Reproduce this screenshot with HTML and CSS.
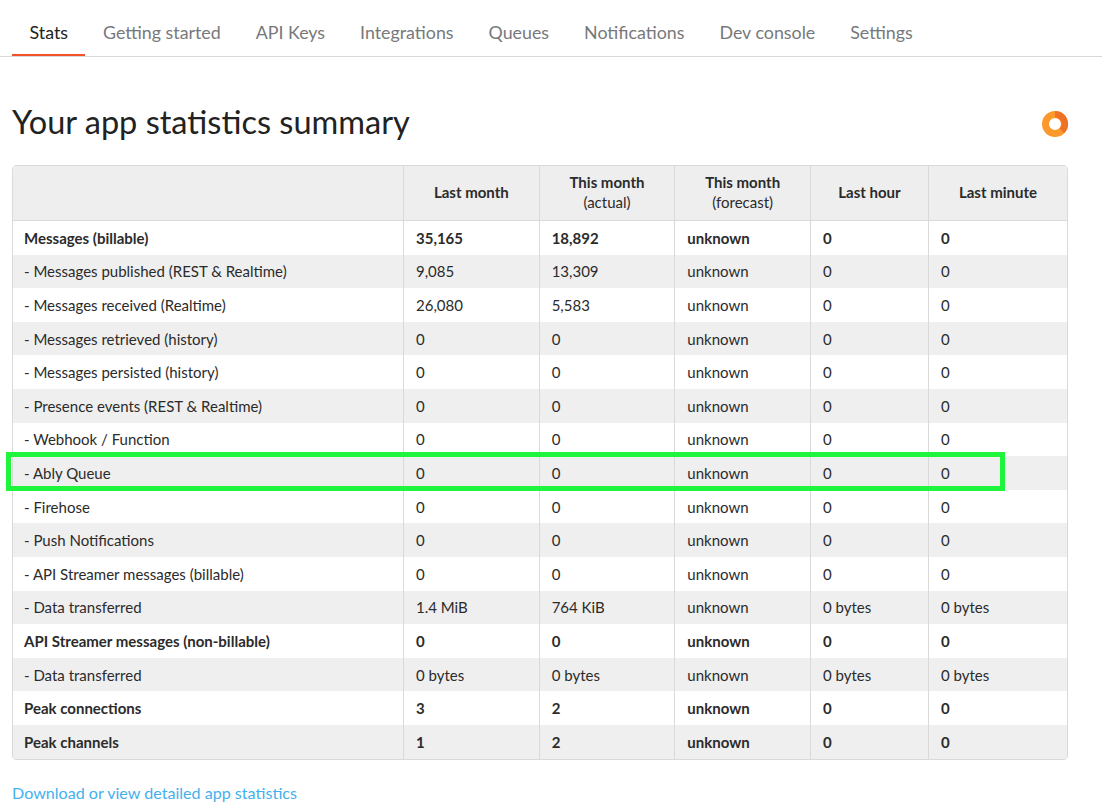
FILE: index.html
```html
<!DOCTYPE html>
<html>
<head>
    <title>Your app statistics summary</title>
    <link rel="stylesheet" href="styles.css">
</head>
<body>
    <nav class="tabs">
        <a class="tab tab-active" href="#">Stats</a>
        <a class="tab" href="#">Getting started</a>
        <a class="tab" href="#">API Keys</a>
        <a class="tab" href="#">Integrations</a>
        <a class="tab" href="#">Queues</a>
        <a class="tab" href="#">Notifications</a>
        <a class="tab" href="#">Dev console</a>
        <a class="tab" href="#">Settings</a>
    </nav>

    <main class="content">
        <div class="title-row">
            <h1>Your app statistics summary</h1>
            <svg class="spinner" width="26" height="26" viewBox="0 0 26 26">
                <circle cx="13" cy="13" r="9.5" fill="none" stroke="#fb992c" stroke-width="7"/>
                <path d="M13 0 A13 13 0 0 1 22.2 22.2 L17.6 17.6 A6.5 6.5 0 0 0 13 6.5 Z" fill="#ef7123"/>
            </svg>
        </div>

        <div class="stats-wrap">
            <table class="stats">
                <thead>
                    <tr>
                        <th class="col-name"></th>
                        <th class="col-a">Last month</th>
                        <th class="col-a">This month<span class="sub">(actual)</span></th>
                        <th class="col-a">This month<span class="sub">(forecast)</span></th>
                        <th class="col-b">Last hour</th>
                        <th>Last minute</th>
                    </tr>
                </thead>
                <tbody>
                    <tr class="strong"><td>Messages (billable)</td><td>35,165</td><td>18,892</td><td>unknown</td><td>0</td><td>0</td></tr>
                    <tr><td>- Messages published (REST &amp; Realtime)</td><td>9,085</td><td>13,309</td><td>unknown</td><td>0</td><td>0</td></tr>
                    <tr><td>- Messages received (Realtime)</td><td>26,080</td><td>5,583</td><td>unknown</td><td>0</td><td>0</td></tr>
                    <tr><td>- Messages retrieved (history)</td><td>0</td><td>0</td><td>unknown</td><td>0</td><td>0</td></tr>
                    <tr><td>- Messages persisted (history)</td><td>0</td><td>0</td><td>unknown</td><td>0</td><td>0</td></tr>
                    <tr><td>- Presence events (REST &amp; Realtime)</td><td>0</td><td>0</td><td>unknown</td><td>0</td><td>0</td></tr>
                    <tr><td>- Webhook / Function</td><td>0</td><td>0</td><td>unknown</td><td>0</td><td>0</td></tr>
                    <tr><td>- Ably Queue</td><td>0</td><td>0</td><td>unknown</td><td>0</td><td>0</td></tr>
                    <tr><td>- Firehose</td><td>0</td><td>0</td><td>unknown</td><td>0</td><td>0</td></tr>
                    <tr><td>- Push Notifications</td><td>0</td><td>0</td><td>unknown</td><td>0</td><td>0</td></tr>
                    <tr><td>- API Streamer messages (billable)</td><td>0</td><td>0</td><td>unknown</td><td>0</td><td>0</td></tr>
                    <tr><td>- Data transferred</td><td>1.4 MiB</td><td>764 KiB</td><td>unknown</td><td>0 bytes</td><td>0 bytes</td></tr>
                    <tr class="strong"><td>API Streamer messages (non-billable)</td><td>0</td><td>0</td><td>unknown</td><td>0</td><td>0</td></tr>
                    <tr><td>- Data transferred</td><td>0 bytes</td><td>0 bytes</td><td>unknown</td><td>0 bytes</td><td>0 bytes</td></tr>
                    <tr class="strong"><td>Peak connections</td><td>3</td><td>2</td><td>unknown</td><td>0</td><td>0</td></tr>
                    <tr class="strong"><td>Peak channels</td><td>1</td><td>2</td><td>unknown</td><td>0</td><td>0</td></tr>
                </tbody>
            </table>
            <div class="highlight"></div>
        </div>

        <a class="details-link" href="#">Download or view detailed app statistics</a>
    </main>
</body>
</html>
```

FILE: styles.css
```css
body {
    margin: 0;
    font-family: Lato, "Open Sans", sans-serif;
    color: #2b2b2b;
    background-color: #fff;
}
.tabs {
    display: flex;
    height: 56px;
    padding-left: 12px;
    border-bottom: 1px solid #d9d9d9;
}
.tab {
    height: 54px;
    padding: 0 17.5px;
    border-bottom: 2px solid transparent;
    color: #77787b;
    font-size: 17.82px;
    line-height: 64px;
    text-decoration: none;
}
.tab-active {
    border-bottom-color: #f4512c;
    color: #222;
}
.content {
    padding: 0 34px 0 12px;
}
.title-row {
    display: flex;
    justify-content: space-between;
    align-items: center;
    box-sizing: border-box;
    height: 108px;
    padding-top: 20px;
}
h1 {
    margin: 0;
    color: #222;
    font-size: 32.5px;
    font-weight: 400;
}
.spinner {
    display: block;
    margin-top: 6px;
}
.stats-wrap {
    position: relative;
}
.stats {
    width: 100%;
    border: 1px solid #d9d9d9;
    border-radius: 4px;
    border-spacing: 0;
    table-layout: fixed;
    font-size: 15px;
}
.stats th {
    box-sizing: border-box;
    height: 55px;
    padding: 0 6px 2px;
    border-bottom: 1px solid #d9d9d9;
    border-left: 1px solid #d9d9d9;
    background-color: #eee;
    font-weight: 700;
    line-height: 20px;
    text-align: center;
}
.stats th:first-child,
.stats td:first-child {
    border-left: none;
}
.col-name {
    width: 390px;
}
.col-a {
    width: 135.67px;
}
.col-b {
    width: 118px;
}
.sub {
    display: block;
    font-weight: 400;
}
.stats td {
    height: 33.6px;
    padding: 0 12px;
    border-left: 1px solid #d9d9d9;
    box-sizing: border-box;
}
.stats td:first-child {
    padding-left: 11px;
}
.stats tbody tr:nth-child(even) td {
    background-color: #efefef;
}
.strong td {
    font-weight: 700;
}
.highlight {
    position: absolute;
    left: -6px;
    top: 287px;
    width: 989px;
    height: 29px;
    border: 5px solid #1ff53c;
}
.details-link {
    display: block;
    margin-top: 23px;
    color: #45b0ee;
    font-size: 16.1px;
    text-decoration: none;
}
```
